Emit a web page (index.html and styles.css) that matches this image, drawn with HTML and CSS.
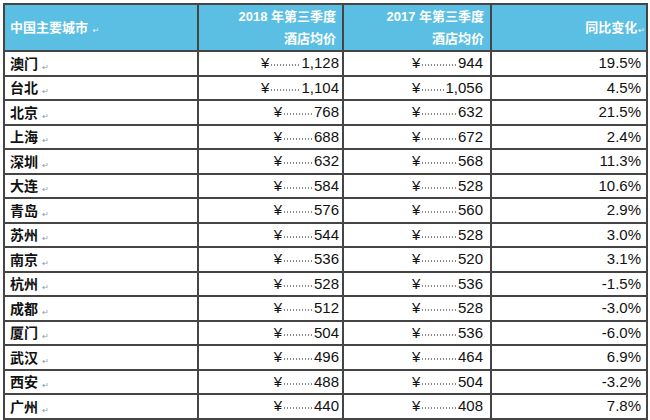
FILE: index.html
```html
<!DOCTYPE html>
<html lang="zh">
<head>
<meta charset="utf-8">
<link rel="stylesheet" href="styles.css">
</head>
<body>
<table class="tbl">
  <colgroup>
    <col class="c-city">
    <col class="c-p18">
    <col class="c-p17">
    <col class="c-chg">
  </colgroup>
  <thead>
    <tr>
      <th class="h-city">中国主要城市 <span class="pm pm-h">↵</span></th>
      <th class="h-num">2018 年第三季度<br>酒店均价</th>
      <th class="h-num">2017 年第三季度<br>酒店均价</th>
      <th class="h-num">同比变化<span class="pm pm-h">↵</span></th>
    </tr>
  </thead>
  <tbody>
    <tr><td class="city">澳门 <span class="pm">↵</span></td><td><div class="m18"><span class="y">¥</span><span class="lead"></span><span>1,128</span></div></td><td><div class="m17"><span class="y">¥</span><span class="fill"></span><span>944</span></div></td><td class="chg">19.5%</td></tr>
    <tr><td class="city">台北 <span class="pm">↵</span></td><td><div class="m18"><span class="y">¥</span><span class="lead"></span><span>1,104</span></div></td><td><div class="m17"><span class="y">¥</span><span class="fill"></span><span>1,056</span></div></td><td class="chg">4.5%</td></tr>
    <tr><td class="city">北京 <span class="pm">↵</span></td><td><div class="m18"><span class="y">¥</span><span class="lead"></span><span>768</span></div></td><td><div class="m17"><span class="y">¥</span><span class="fill"></span><span>632</span></div></td><td class="chg">21.5%</td></tr>
    <tr><td class="city">上海 <span class="pm">↵</span></td><td><div class="m18"><span class="y">¥</span><span class="lead"></span><span>688</span></div></td><td><div class="m17"><span class="y">¥</span><span class="fill"></span><span>672</span></div></td><td class="chg">2.4%</td></tr>
    <tr><td class="city">深圳 <span class="pm">↵</span></td><td><div class="m18"><span class="y">¥</span><span class="lead"></span><span>632</span></div></td><td><div class="m17"><span class="y">¥</span><span class="fill"></span><span>568</span></div></td><td class="chg">11.3%</td></tr>
    <tr><td class="city">大连 <span class="pm">↵</span></td><td><div class="m18"><span class="y">¥</span><span class="lead"></span><span>584</span></div></td><td><div class="m17"><span class="y">¥</span><span class="fill"></span><span>528</span></div></td><td class="chg">10.6%</td></tr>
    <tr><td class="city">青岛 <span class="pm">↵</span></td><td><div class="m18"><span class="y">¥</span><span class="lead"></span><span>576</span></div></td><td><div class="m17"><span class="y">¥</span><span class="fill"></span><span>560</span></div></td><td class="chg">2.9%</td></tr>
    <tr><td class="city">苏州 <span class="pm">↵</span></td><td><div class="m18"><span class="y">¥</span><span class="lead"></span><span>544</span></div></td><td><div class="m17"><span class="y">¥</span><span class="fill"></span><span>528</span></div></td><td class="chg">3.0%</td></tr>
    <tr><td class="city">南京 <span class="pm">↵</span></td><td><div class="m18"><span class="y">¥</span><span class="lead"></span><span>536</span></div></td><td><div class="m17"><span class="y">¥</span><span class="fill"></span><span>520</span></div></td><td class="chg">3.1%</td></tr>
    <tr><td class="city">杭州 <span class="pm">↵</span></td><td><div class="m18"><span class="y">¥</span><span class="lead"></span><span>528</span></div></td><td><div class="m17"><span class="y">¥</span><span class="fill"></span><span>536</span></div></td><td class="chg">-1.5%</td></tr>
    <tr><td class="city">成都 <span class="pm">↵</span></td><td><div class="m18"><span class="y">¥</span><span class="lead"></span><span>512</span></div></td><td><div class="m17"><span class="y">¥</span><span class="fill"></span><span>528</span></div></td><td class="chg">-3.0%</td></tr>
    <tr><td class="city">厦门 <span class="pm">↵</span></td><td><div class="m18"><span class="y">¥</span><span class="lead"></span><span>504</span></div></td><td><div class="m17"><span class="y">¥</span><span class="fill"></span><span>536</span></div></td><td class="chg">-6.0%</td></tr>
    <tr><td class="city">武汉 <span class="pm">↵</span></td><td><div class="m18"><span class="y">¥</span><span class="lead"></span><span>496</span></div></td><td><div class="m17"><span class="y">¥</span><span class="fill"></span><span>464</span></div></td><td class="chg">6.9%</td></tr>
    <tr><td class="city">西安 <span class="pm">↵</span></td><td><div class="m18"><span class="y">¥</span><span class="lead"></span><span>488</span></div></td><td><div class="m17"><span class="y">¥</span><span class="fill"></span><span>504</span></div></td><td class="chg">-3.2%</td></tr>
    <tr><td class="city">广州 <span class="pm">↵</span></td><td><div class="m18"><span class="y">¥</span><span class="lead"></span><span>440</span></div></td><td><div class="m17"><span class="y">¥</span><span class="fill"></span><span>408</span></div></td><td class="chg">7.8%</td></tr>
  </tbody>
</table>
</body>
</html>
```
FILE: styles.css
```css
html, body {
  margin: 0;
  padding: 0;
  background: #ffffff;
}
body {
  padding: 3px 0 0 3px;
  font-family: "Liberation Sans", "Noto Sans CJK SC", sans-serif;
  color: #111;
}
.tbl {
  border-collapse: collapse;
  table-layout: fixed;
  width: 643px;
}
.c-city { width: 194px; }
.c-p18 { width: 145px; }
.c-p17 { width: 148px; }
.c-chg { width: 156px; }

.tbl th, .tbl td {
  border: 2px solid #454545;
  padding: 0;
  white-space: nowrap;
  overflow: hidden;
  line-height: 16px;
}
.tbl thead tr { height: 47px; }
.tbl tbody tr { height: 24.5px; }

.tbl th {
  background: #5bbfe3;
  color: #ffffff;
  font-family: "Liberation Sans", "Noto Sans CJK SC", sans-serif;
  font-weight: 700;
  font-size: 13px;
  line-height: 22px;
}
.h-city {
  text-align: left;
  padding-left: 5px !important;
}
.h-num {
  text-align: right;
  padding-right: 6px !important;
}
.h-num .pm-h {
  margin-right: -5px;
}
.city {
  font-family: "Noto Sans CJK SC", sans-serif;
  font-weight: 700;
  font-size: 14px;
  padding-left: 5px !important;
}
.pm {
  font-family: "DejaVu Sans", sans-serif;
  font-weight: 400;
  font-size: 8px;
  line-height: 8px;
  color: #8797b3;
  margin-left: 1px;
  vertical-align: -1px;
}
.pm-h {
  color: #e8f5fb;
}
.m18, .m17, .chg {
  font-size: 15px;
}
.m18, .m17 {
  display: flex;
  align-items: center;
  justify-content: flex-end;
  height: 16px;
}
.m18 { margin-right: 3px; }
.m17 {
  margin-right: 7px;
  margin-left: auto;
  width: 71px;
}
.chg {
  text-align: right;
  padding-right: 5px !important;
}
.y {
  font-size: 15px;
  margin-right: 1px;
}
.lead, .fill {
  height: 2px;
  margin-top: 4px;
  background-image: radial-gradient(circle, #8a8a8a 0.7px, transparent 0.9px);
  background-size: 3px 2px;
  background-repeat: repeat-x;
  margin-right: 1px;
}
.lead { width: 30px; }
.fill { flex: 1; }
```
